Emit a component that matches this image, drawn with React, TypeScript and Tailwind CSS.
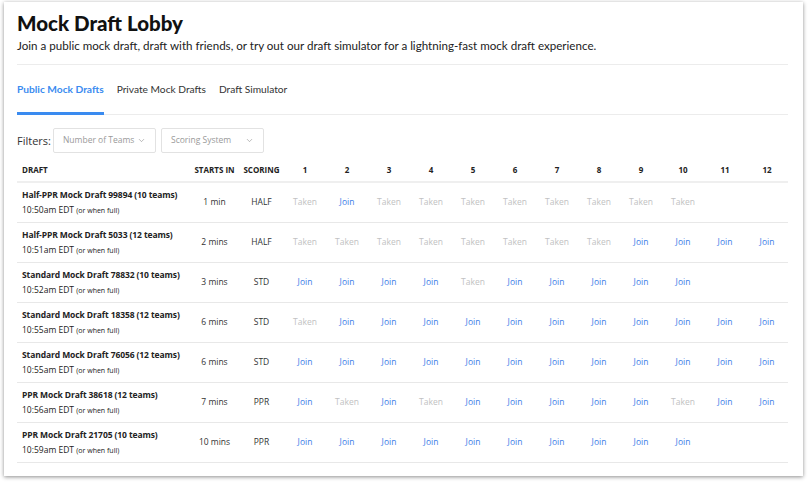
import { ChevronDown } from "lucide-react";

type Cell = "T" | "J" | "";

const drafts: { name: string; time: string; starts: string; scoring: string; slots: string }[] = [
	{ name: "Half-PPR Mock Draft 99894 (10 teams)", time: "10:50am", starts: "1 min", scoring: "HALF", slots: "TJTTTTTTTT" },
	{ name: "Half-PPR Mock Draft 5033 (12 teams)", time: "10:51am", starts: "2 mins", scoring: "HALF", slots: "TTTTTTTTJJJJ" },
	{ name: "Standard Mock Draft 78832 (10 teams)", time: "10:52am", starts: "3 mins", scoring: "STD", slots: "JJJJTJJJJJ" },
	{ name: "Standard Mock Draft 18358 (12 teams)", time: "10:55am", starts: "6 mins", scoring: "STD", slots: "TJJJJJJJJJJJ" },
	{ name: "Standard Mock Draft 76056 (12 teams)", time: "10:55am", starts: "6 mins", scoring: "STD", slots: "JJJJJJJJJJJJ" },
	{ name: "PPR Mock Draft 38618 (12 teams)", time: "10:56am", starts: "7 mins", scoring: "PPR", slots: "JTJTJJJJJTJJ" },
	{ name: "PPR Mock Draft 21705 (10 teams)", time: "10:59am", starts: "10 mins", scoring: "PPR", slots: "JJJJJJJJJJ" },
];

const cols = [1, 2, 3, 4, 5, 6, 7, 8, 9, 10, 11, 12];

const Select = ({ label }: { label: string }) => (
	<div className="w-[103px] h-[25px] border border-[#e2e2e2] rounded-[2px] flex items-center justify-between pl-[9px] pr-[9px] text-[8.5px] text-[#9a9a9a] whitespace-nowrap">
		<span>{label}</span>
		<ChevronDown size={9} strokeWidth={1.5} className="text-[#888]" />
	</div>
);

const App = () => {
	return (
		<div className="w-[808px] h-[482px] bg-white pl-[4px] pt-[2px] font-['Lato',sans-serif]">
			<div className="w-[799px] h-[474px] bg-white shadow-[0_1px_4px_rgba(0,0,0,0.45)] pl-[13px] pr-[15px] pt-[7px]">
				{/* Header */}
				<h1 className="text-[20.5px] leading-[28px] font-black text-[#111]">Mock Draft Lobby</h1>
				<p className="text-[11.6px] leading-[16px] text-[#222] mt-[1px]">
					Join a public mock draft, draft with friends, or try out our draft simulator for a lightning-fast mock draft experience.
				</p>
				<div className="border-b border-[#ececec] mt-[10px]" />

				{/* Tabs */}
				<div className="flex gap-[13px] border-b border-[#ececec] mt-[17px] text-[10.2px]">
					<div className="pb-[15px] border-b-[3px] border-[#3a8bf0] -mb-px font-bold text-[#3a8bf0]">Public Mock Drafts</div>
					<div className="pb-[15px] text-[#333]">Private Mock Drafts</div>
					<div className="pb-[15px] text-[#333]">Draft Simulator</div>
				</div>

				{/* Filters */}
				<div className="flex items-center gap-[5px] mt-[13px] font-['Open_Sans',sans-serif]">
					<span className="text-[11px] text-[#333] mr-[-3px]">Filters:</span>
					<Select label="Number of Teams" />
					<Select label="Scoring System" />
				</div>

				{/* Table */}
				<table className="table-fixed border-collapse w-[771px] mt-[6px] font-['Open_Sans',sans-serif] text-[8.5px]">
					<colgroup>
						<col className="w-[173px]" />
						<col className="w-[49px]" />
						<col className="w-[45px]" />
						{cols.map((c) => (
							<col key={c} className="w-[42px]" />
						))}
					</colgroup>
					<thead>
						<tr className="border-b-2 border-[#efefef] h-[23px] text-[8px] font-bold text-[#222]">
							<th className="text-left pl-[5px]">DRAFT</th>
							<th className="text-center whitespace-nowrap">STARTS IN</th>
							<th className="text-center">SCORING</th>
							{cols.map((c) => (
								<th key={c} className="text-center">{c}</th>
							))}
						</tr>
					</thead>
					<tbody>
						{drafts.map((d) => (
							<tr key={d.name} className="border-b border-[#e8e8e8] h-[40px]">
								<td className="pl-[5px] whitespace-nowrap">
									<div className="font-bold text-[#222] leading-[13px] tracking-[-0.1px]">{d.name}</div>
									<div className="text-[#222] leading-[13px] mt-[2px]">
										{d.time} EDT <span className="text-[7px]">(or when full)</span>
									</div>
								</td>
								<td className="text-center text-[#333]">{d.starts}</td>
								<td className="text-center text-[#333]">{d.scoring}</td>
								{cols.map((c, i) => {
									const s = (d.slots[i] ?? "") as Cell;
									return (
										<td key={c} className="text-center">
											{s === "T" && <span className="text-[#c2c2c2]">Taken</span>}
											{s === "J" && <span className="text-[#3b7de8]">Join</span>}
										</td>
									);
								})}
							</tr>
						))}
					</tbody>
				</table>
			</div>
		</div>
	);
};

export default App;
